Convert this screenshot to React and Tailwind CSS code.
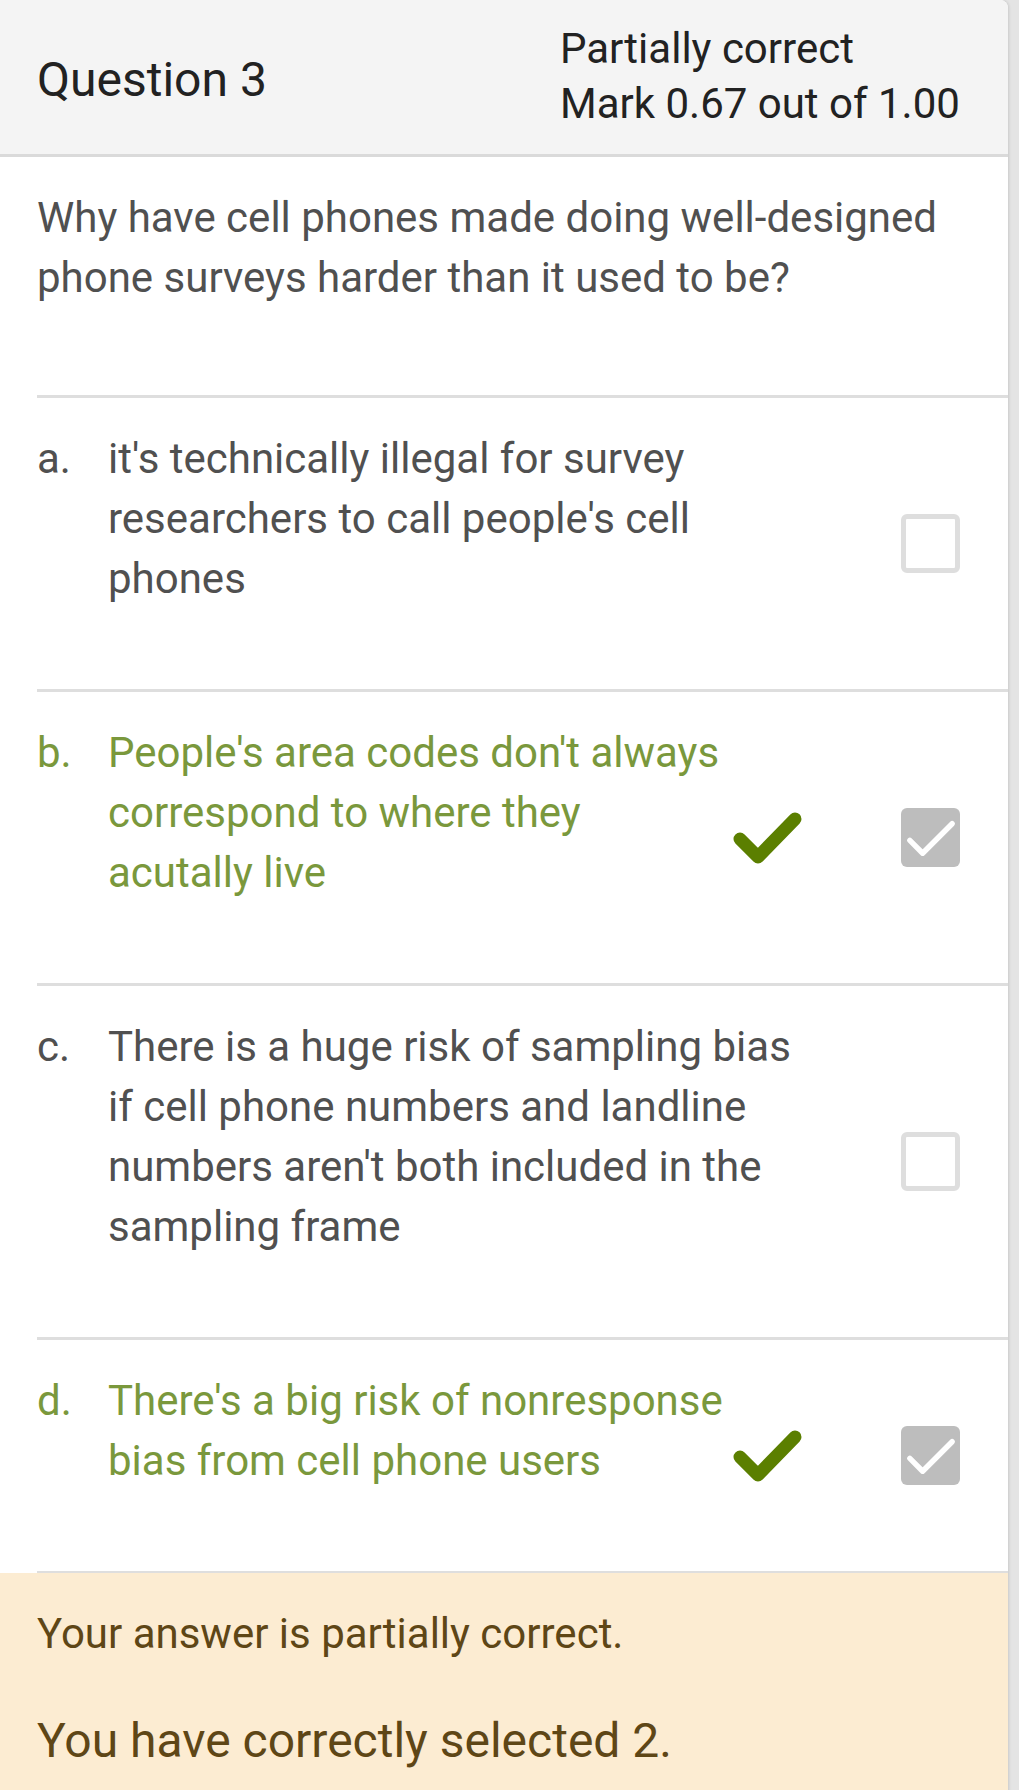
import React from 'react';

const options = [
    { letter: 'a.', text: "it's technically illegal for survey researchers to call people's cell phones", correct: false, checked: false },
    { letter: 'b.', text: "People's area codes don't always correspond to where they acutally live", correct: true, checked: true },
    { letter: 'c.', text: "There is a huge risk of sampling bias if cell phone numbers and landline numbers aren't both included in the sampling frame", correct: false, checked: false },
    { letter: 'd.', text: "There's a big risk of nonresponse bias from cell phone users", correct: true, checked: true },
];

const GreenCheck = () => (
    <svg width="72" height="56" viewBox="0 0 72 56" className="shrink-0">
        <polyline points="9,29 27,47 64,9" fill="none" stroke="#5b7f00" strokeWidth="13" strokeLinecap="round" strokeLinejoin="round" />
    </svg>
);

const Checkbox = ({ checked }) => (
    checked ? (
        <div className="w-[59px] h-[59px] rounded-[6px] bg-[#bdbdbd] flex items-center justify-center shrink-0">
            <svg width="59" height="59" viewBox="0 0 60 60">
                <polyline points="9,33 22,46 52,16" fill="none" stroke="#ffffff" strokeWidth="5.5" strokeLinecap="round" strokeLinejoin="round" />
            </svg>
        </div>
    ) : (
        <div className="w-[59px] h-[59px] rounded-[6px] border-[5px] border-[#dedede] bg-white shrink-0" />
    )
);

const OptionRow = ({ option }) => {
    const color = option.correct ? 'text-[#7a983c]' : 'text-[#505050]';
    return (
        <div className="flex items-start border-t-[3px] border-[#dedede] pr-[48px]">
            <span className={`w-[71px] shrink-0 pt-[31px] ${color}`}>{option.letter}</span>
            <div className="w-[708px] shrink-0 flex items-center self-stretch">
                <div className={`flex-1 pt-[31px] pb-[80px] ${color}`}>{option.text}</div>
                {option.correct && (
                    <div className="ml-[6px] mr-[13px]">
                        <GreenCheck />
                    </div>
                )}
            </div>
            <div className="flex-1" />
            <div className="self-center">
                <Checkbox checked={option.checked} />
            </div>
        </div>
    );
};

const App = () => {
    return (
        <div className="min-h-screen bg-[#e4e4e4]" style={{ fontFamily: 'Roboto, "Noto Sans", sans-serif' }}>
            <div className="w-[1008px] min-h-[1790px] bg-white rounded-tr-[8px] overflow-hidden shadow-[1px_0_3px_rgba(0,0,0,0.12)] text-[42px] leading-[60px] flex flex-col">
                <div className="h-[157px] bg-[#f4f4f4] border-b-[3px] border-[#dadada] flex items-center pl-[37px] text-[#222222]">
                    <div className="w-[523px] text-[48px] mt-[6px]">Question 3</div>
                    <div className="leading-[55px] pb-[2px]">
                        <div>Partially correct</div>
                        <div>Mark 0.67 out of 1.00</div>
                    </div>
                </div>

                <div className="pl-[37px] pr-[30px] pt-[31px] pb-[87px] text-[#505050]">
                    Why have cell phones made doing well-designed phone surveys harder than it used to be?
                </div>

                <div className="ml-[37px]">
                    {options.map((option) => (
                        <OptionRow key={option.letter} option={option} />
                    ))}
                    <div className="border-t-[3px] border-[#dedede]" />
                </div>

                <div className="flex-1 bg-[#fcecd2] text-[#5e4616] pl-[37px] pt-[31px] pb-[40px] -mt-[1px]">
                    <div>Your answer is partially correct.</div>
                    <div className="mt-[44px] text-[48px] leading-[66px]">You have correctly selected 2.</div>
                </div>
            </div>
        </div>
    );
};

export default App;
